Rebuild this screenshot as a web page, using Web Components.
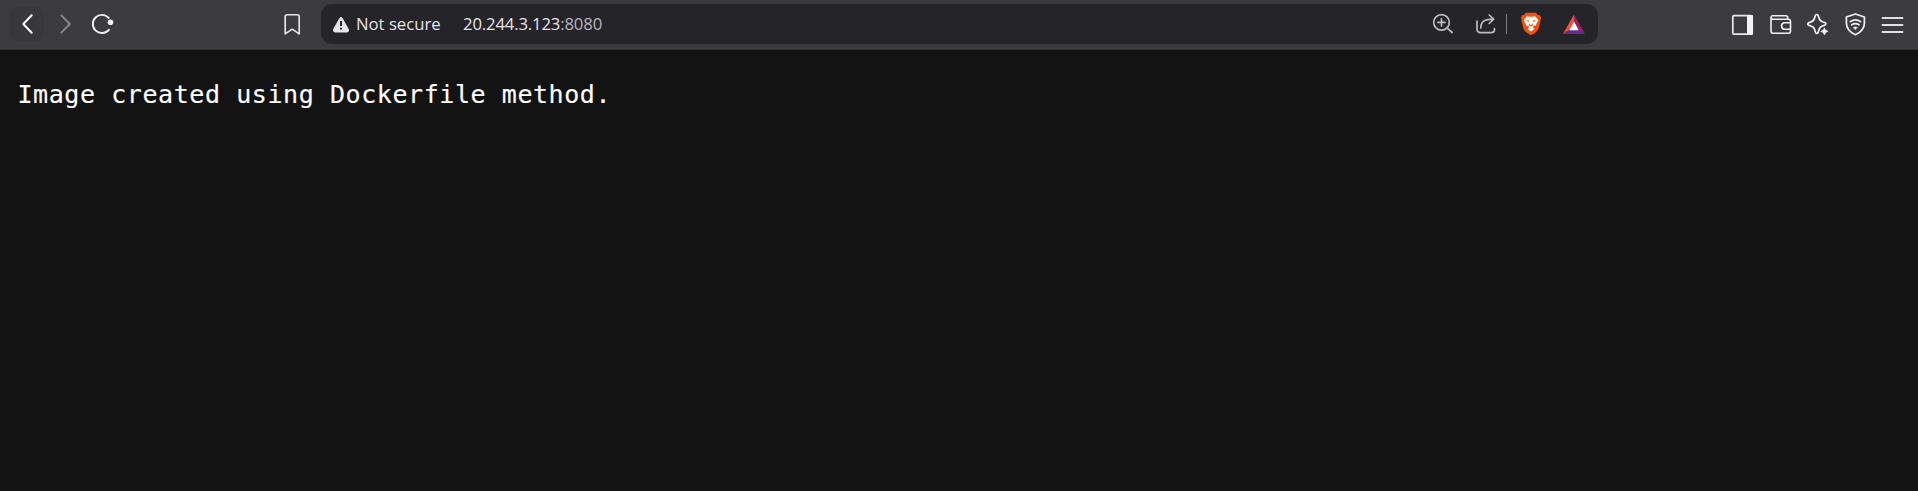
<!DOCTYPE html>
<html lang="en">
<head>
<meta charset="utf-8">
<title>20.244.3.123:8080</title>
<style>
html,body{margin:0;height:100%;background:#131313;overflow:hidden}
</style>
</head>
<body>
<browser-window></browser-window>
<script>
const icons = {
  back: '<path d="M19.7 6.3 11.3 15 19.7 23.7" stroke="#fff" stroke-width="2"/>',
  forward: '<path d="M10.3 6.3 18.8 15 10.3 23.7" stroke="#89888d" stroke-width="1.8"/>',
  reload: '<path d="M21.9 20.8A9.1 9.1 0 1 1 21.7 8.9" stroke="#f0eff3" stroke-width="1.9"/><circle cx="23.5" cy="13.3" r="2.8" fill="#f0eff3" stroke="none"/>',
  bookmark: '<path d="M9.2 5.7H19.2Q21.2 5.7 21.2 7.7V24.9L14.2 20.2 7.2 24.9V7.7Q7.2 5.7 9.2 5.7Z" stroke="#e9e8ec" stroke-width="1.6"/>',
  warning: '<path d="M14 9Q15 7.4 16 9L22.4 20.4Q23.2 22.7 21 23H9Q6.8 22.7 7.6 20.4Z" fill="#e6e5eb" stroke="#e6e5eb" stroke-width="1"/><path d="M15 12V17M15 18.7V20.6" stroke="#29282c" stroke-width="2" stroke-linecap="butt"/>',
  zoom: '<circle cx="12.5" cy="13.4" r="7.8"/><path d="M18.2 19.2 23.2 23.5M12.5 9.8V17M8.9 13.4H16.1" />',
  share: '<path d="M6 12V20Q6 23.6 9.5 23.6H20Q23.5 23.6 23.5 20.5V19.5M9.8 19C10 12.5 13 10.2 22.6 10.2M18.2 6 22.7 10.2 18.2 14.5"/>',
  lion: '<path d="M10 3.8H20L21.8 5.8 23.8 6.2 25.2 8.8 24.3 11 24.6 12 22.4 20Q21.2 23.2 15 26.2Q8.8 23.2 7.6 20L5.4 12 5.7 11 4.8 8.8 6.2 6.2 8.2 5.8Z" fill="#f4510b" stroke="none"/><path d="M11 7.2 13.2 7.7H16.8L19 7.2 22.3 11 20.5 14.5 20 16.2 17.3 17.2 16.9 18.3 18.4 20 15 22.5 11.6 20 13.1 18.3 12.7 17.2 10 16.2 9.5 14.5 7.7 11Z" fill="#fff" stroke="none"/><path d="M9.7 11 13.2 11.6 12.8 13.1ZM20.3 11 16.8 11.6 17.2 13.1ZM13.3 14 12.6 16.2 15 17.4 17.4 16.2 16.7 14 16 15.7 15 16.2 14 15.7Z" fill="#f4510b" stroke="none"/>',
  bat: '<g stroke="none"><path d="M15 5.5 4 25 11 20.5 15 13Z" fill="#ff4b32"/><path d="M15 5.5 26 25 19 20.5 15 13Z" fill="#9d1f63"/><path d="M4 25H26L19 20.5H11Z" fill="#642e91"/><path d="M15 12.5 10.2 21.3H19.8Z" fill="#fff"/></g>',
  panel: '<rect x="4.8" y="5.7" width="19.4" height="18.4" rx="1.2" stroke="#ece8ef" stroke-width="1.7"/><path d="M19 5H23.6Q25 5 25 6.4V23.5Q25 25 23.6 25H19Z" fill="#f3f1f7" stroke="none"/>',
  wallet: '<path d="M21.7 8.9V7.8Q21.7 5.8 19.7 5.8H6.5Q5 5.8 5 7.5V21Q5 23.3 7.3 23.3H22.2Q24.5 23.3 24.5 21V11.3Q24.5 9.2 22.2 9.2H7Q5 9.2 5 7.4M24.2 12.8H18.5Q15.6 13 15.6 16T18.5 19.3H24.2" stroke="#f0eff3" stroke-width="1.6"/>',
  sparkle: '<path d="M13.7 4.5Q15.3 4.5 15.7 7Q16.5 11 20.1 12Q23.1 12.6 22.9 14Q22.7 15.2 19.9 15.8Q16.5 16.8 15.7 20.6Q15.2 23.4 13.7 23.5Q12.5 23.4 11.9 20.4Q11.1 16.6 7.4 15.8Q4.8 15.3 4.7 14Q4.8 12.8 7.4 12.1Q11.1 11 11.9 7Q12.4 4.5 13.7 4.5Z" stroke="#f0eff3" stroke-width="1.7"/><path d="M21.4 18.3Q21.9 20.8 24.4 21.3Q21.9 21.8 21.4 24.3Q20.9 21.8 18.4 21.3Q20.9 20.8 21.4 18.3Z" fill="#f0eff3" stroke="#f0eff3" stroke-width="1.2"/>',
  vpn: '<path d="M14.4 4 23.4 7V13C23.4 19 20.2 22.2 14.4 24.7C8.6 22.2 5.4 19 5.4 13V7Z" stroke="#f0eff3" stroke-width="1.7"/><path d="M9.2 11.6Q14.4 8 19.6 11.6M10.7 14.8Q14.4 12.3 18.1 14.8" stroke="#f0eff3" stroke-width="1.7"/><path d="M12.4 17.5Q14.4 16 16.4 17.5L14.4 19.5Z" fill="#f0eff3" stroke="#f0eff3" stroke-width=".5"/>',
  menu: '<path d="M4.5 8H24.5M4.5 15H24.5M4.5 22H24.5" stroke="#e2e1e5" stroke-width="1.8"/>'
};

class BrowserIcon extends HTMLElement {
  constructor() {
    super();
    this.attachShadow({mode: 'open'}).innerHTML = `<style>
      :host{display:block;flex:none;width:30px;height:30px}
      svg{display:block;fill:none;stroke:#bdbcc1;stroke-width:1.7;stroke-linecap:round;stroke-linejoin:round}
    </style><svg width="30" height="30" viewBox="0 0 30 30" aria-hidden="true">${icons[this.getAttribute('name')]}</svg>`;
  }
}
customElements.define('browser-icon', BrowserIcon);

class AddressBar extends HTMLElement {
  constructor() {
    super();
    this.attachShadow({mode: 'open'}).innerHTML = `<style>
      :host{display:flex;align-items:center;box-sizing:border-box;width:1277px;height:40px;padding:0 9px 0 5px;border-radius:11px;background:#252429;font:16.7px/40px "Open Sans","Noto Sans",sans-serif;color:#e5e4e9;white-space:nowrap}
      .status{width:107px;letter-spacing:var(--status-track,0)}
      .url{letter-spacing:var(--url-track,0)}
      .port{color:#b7b6bb}
      .tools{display:flex;align-items:center;margin-left:auto}
      .rule{width:1px;height:20px;margin:0 9px 0 5px;background:#7d7c81}
      .share{margin-left:12px}.bat{margin-left:13px}
    </style>
    <browser-icon name="warning"></browser-icon>
    <span class="status"><slot name="status"></slot></span>
    <span class="url"><slot name="host"></slot><span class="port"><slot name="port"></slot></span></span>
    <div class="tools"><browser-icon name="zoom"></browser-icon><browser-icon class="share" name="share"></browser-icon><span class="rule"></span><browser-icon name="lion"></browser-icon><browser-icon class="bat" name="bat"></browser-icon></div>`;
  }
}
customElements.define('address-bar', AddressBar);

class BrowserToolbar extends HTMLElement {
  constructor() {
    super();
    this.attachShadow({mode: 'open'}).innerHTML = `<style>
      :host{display:flex;box-sizing:border-box;height:50px;padding:4px 10px 0 10px;background:#3c3b40;border-bottom:1px solid #333236}
      .nav,.actions{display:flex;height:40px;align-items:center}
      .back{display:grid;place-items:center;width:34px;height:34px;border-radius:8px;background:#38373b}
      .forward{margin-left:7px}.reload{margin-left:6px}
      .bookmark{margin:5px 13px 0 161px}
      address-bar{--status-track:0px;--url-track:-.15px}
      .actions{margin:1px 0 0 auto;gap:7.5px}
    </style>
    <div class="nav"><div class="back"><browser-icon name="back"></browser-icon></div><browser-icon class="forward" name="forward"></browser-icon><browser-icon class="reload" name="reload"></browser-icon></div>
    <browser-icon class="bookmark" name="bookmark"></browser-icon>
    <address-bar><span slot="status">Not secure</span><span slot="host">20.244.3.123</span><span slot="port">:8080</span></address-bar>
    <div class="actions"><browser-icon name="panel"></browser-icon><browser-icon name="wallet"></browser-icon><browser-icon name="sparkle"></browser-icon><browser-icon name="vpn"></browser-icon><browser-icon name="menu"></browser-icon></div>`;
  }
}
customElements.define('browser-toolbar', BrowserToolbar);

class PageMessage extends HTMLElement {
  constructor() {
    super();
    this.attachShadow({mode: 'open'}).innerHTML = `<style>
      :host{display:block;flex:1;background:#131313;padding:28px 17.5px 0}
      p{margin:0;color:#fff;-webkit-text-stroke:.15px #fff;font:25px/34px "DejaVu Sans Mono","Liberation Mono",monospace;letter-spacing:.57px;white-space:pre}
    </style><p><slot></slot></p>`;
  }
}
customElements.define('page-message', PageMessage);

class BrowserWindow extends HTMLElement {
  constructor() {
    super();
    this.attachShadow({mode: 'open'}).innerHTML = `<style>
      :host{display:flex;flex-direction:column;height:100vh}
    </style><browser-toolbar></browser-toolbar><page-message>Image created using Dockerfile method.</page-message>`;
  }
}
customElements.define('browser-window', BrowserWindow);
</script>
</body>
</html>
